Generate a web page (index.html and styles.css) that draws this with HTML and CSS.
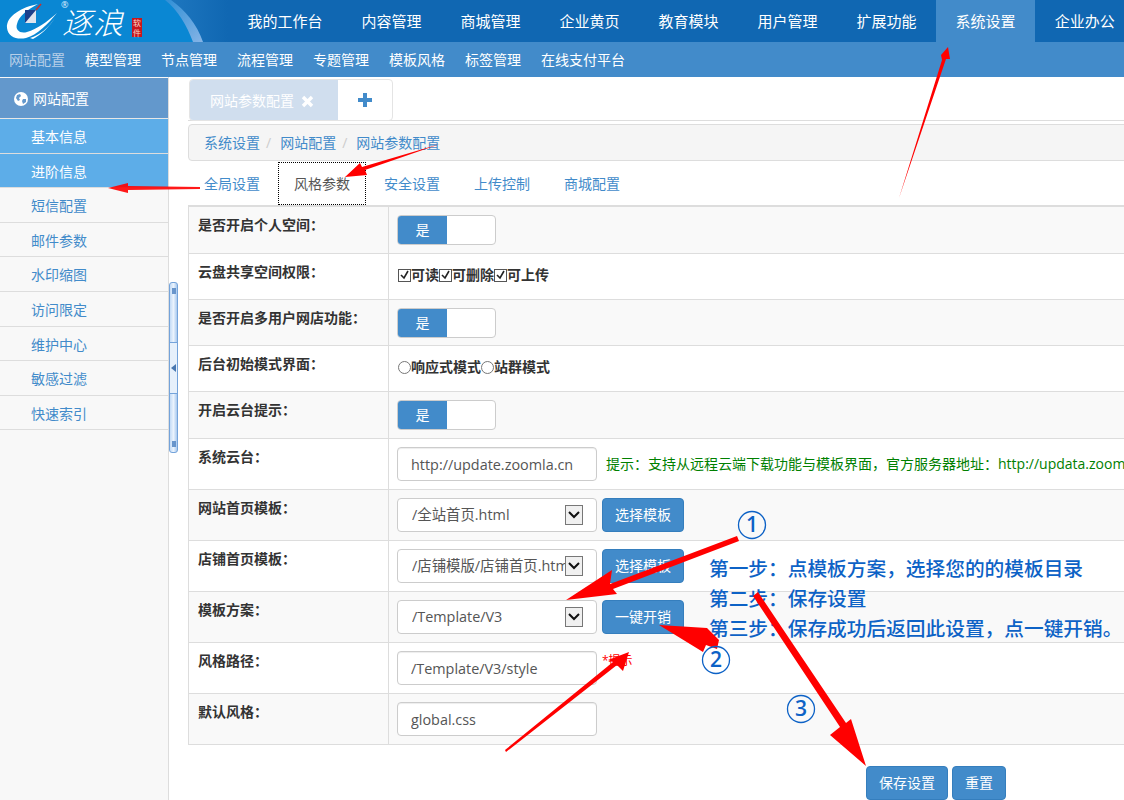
FILE: index.html
```html
<!DOCTYPE html>
<html lang="zh-CN">
<head>
	<meta charset="UTF-8">
	<title>网站参数配置</title>
	<link rel="stylesheet" href="styles.css">
</head>
<body>
	<div class="top">
		<div class="logo">
			<svg class="logo_mark" width="62" height="42" viewBox="0 0 62 42">
				<path d="M38 4C22 7 6 16 7 28c1 9 10 12 19 10 11-3 22-14 31-25-10 9-20 16-30 19-7 2-12-2-10-8 2-8 10-14 21-20z" fill="#fff"/>
				<path d="M30 38c10-3 18-10 25-20-6 9-14 17-22 21z" fill="#fff"/>
				<path d="M25 10h11v13H25z" fill="#dfe5ee"/>
				<path d="M25 23l11-13H25z" fill="#1d3f8a"/>
				<path d="M36 10l5-6" stroke="#c9302c" stroke-width="1.5"/>
			</svg>
			<span class="logo_r">®</span>
			<span class="logo_name">逐浪</span>
			<span class="logo_seal">软件</span>
			<svg class="logo_band" width="63" height="42" viewBox="0 0 63 42">
				<defs>
					<linearGradient id="band" x1="0" y1="0" x2="1" y2="1">
						<stop offset="0" stop-color="#2f8fd6"/>
						<stop offset="1" stop-color="#86b4e6"/>
					</linearGradient>
					<linearGradient id="night" x1="0" y1="0" x2="1" y2="0">
						<stop offset="0" stop-color="#1f78c0"/>
						<stop offset="1" stop-color="#1067b2"/>
					</linearGradient>
				</defs>
				<rect width="63" height="42" fill="url(#night)"/>
				<path d="M0 0h4c14 10 27 24 34 42H0z" fill="#0a87d3"/>
				<path d="M0 0h6c14 10 26 24 32 42h-10C22 26 13 10 0 0z" fill="url(#band)"/>
			</svg>
		</div>
		<a class="top_item" href="#">我的工作台</a>
		<a class="top_item" href="#">内容管理</a>
		<a class="top_item" href="#">商城管理</a>
		<a class="top_item" href="#">企业黄页</a>
		<a class="top_item" href="#">教育模块</a>
		<a class="top_item" href="#">用户管理</a>
		<a class="top_item" href="#">扩展功能</a>
		<a class="top_item top_active" href="#">系统设置</a>
		<a class="top_item" href="#">企业办公</a>
	</div>

	<div class="subnav">
		<a class="sub_item sub_active" href="#">网站配置</a>
		<a class="sub_item" href="#">模型管理</a>
		<a class="sub_item" href="#">节点管理</a>
		<a class="sub_item" href="#">流程管理</a>
		<a class="sub_item" href="#">专题管理</a>
		<a class="sub_item" href="#">模板风格</a>
		<a class="sub_item" href="#">标签管理</a>
		<a class="sub_item" href="#">在线支付平台</a>
	</div>

	<div class="content">
		<div class="side">
			<div class="side_head">
				<svg width="14" height="14" viewBox="0 0 14 14">
					<circle cx="7" cy="7" r="7" fill="#fff"/>
					<path d="M3 3l3-1 1 2-2 2 1 2-2 1-2-3zM9 7l3 0 0 3-3 2-1-3z" fill="#6398cc"/>
				</svg>
				网站配置
			</div>
			<a class="side_item side_on" href="#">基本信息</a>
			<a class="side_item side_on" href="#">进阶信息</a>
			<a class="side_item" href="#">短信配置</a>
			<a class="side_item" href="#">邮件参数</a>
			<a class="side_item" href="#">水印缩图</a>
			<a class="side_item" href="#">访问限定</a>
			<a class="side_item" href="#">维护中心</a>
			<a class="side_item" href="#">敏感过滤</a>
			<a class="side_item" href="#">快速索引</a>
		</div>

		<div class="main">
			<div class="pagebar">
				<div class="pagetabs">
					<div class="pagetab">
						网站参数配置
						<svg width="13" height="13" viewBox="0 0 13 13"><path d="M2 2l9 9M11 2l-9 9" stroke="#fff" stroke-width="3.4"/></svg>
					</div>
					<div class="pageadd">
						<svg width="14" height="14" viewBox="0 0 14 14"><path d="M7 0v14M0 7h14" stroke="#428bca" stroke-width="4"/></svg>
					</div>
				</div>
			</div>

			<div class="crumb">
				<a href="#">系统设置</a><i>/</i><a href="#">网站配置</a><i>/</i><a href="#">网站参数配置</a>
			</div>

			<div class="tabs">
				<a class="tab" href="#">全局设置</a>
				<a class="tab tab_on" href="#">风格参数</a>
				<a class="tab" href="#">安全设置</a>
				<a class="tab" href="#">上传控制</a>
				<a class="tab" href="#">商城配置</a>
			</div>

			<table class="form">
				<tr class="row_m">
					<td class="lbl">是否开启个人空间：</td>
					<td><div class="toggle"><span>是</span></div></td>
				</tr>
				<tr class="row_s">
					<td class="lbl">云盘共享空间权限：</td>
					<td>
						<div class="choices">
							<span class="check"><svg width="11" height="11" viewBox="0 0 11 11"><path d="M2 5l3 3 4-7" fill="none" stroke="#222" stroke-width="1.6"/></svg></span>可读
							<span class="check"><svg width="11" height="11" viewBox="0 0 11 11"><path d="M2 5l3 3 4-7" fill="none" stroke="#222" stroke-width="1.6"/></svg></span>可删除
							<span class="check"><svg width="11" height="11" viewBox="0 0 11 11"><path d="M2 5l3 3 4-7" fill="none" stroke="#222" stroke-width="1.6"/></svg></span>可上传
						</div>
					</td>
				</tr>
				<tr class="row_s">
					<td class="lbl">是否开启多用户网店功能：</td>
					<td><div class="toggle"><span>是</span></div></td>
				</tr>
				<tr class="row_s">
					<td class="lbl">后台初始模式界面：</td>
					<td>
						<div class="choices">
							<span class="radio"></span>响应式模式
							<span class="radio"></span>站群模式
						</div>
					</td>
				</tr>
				<tr class="row_m">
					<td class="lbl">开启云台提示：</td>
					<td><div class="toggle"><span>是</span></div></td>
				</tr>
				<tr class="row_l">
					<td class="lbl">系统云台：</td>
					<td>
						<div class="field">
							<input class="text" type="text" value="http://update.zoomla.cn">
							<span class="hint">提示：支持从远程云端下载功能与模板界面，官方服务器地址：http://updata.zoomla.cn</span>
						</div>
					</td>
				</tr>
				<tr class="row_l">
					<td class="lbl">网站首页模板：</td>
					<td>
						<div class="field">
							<div class="sel"><span>/全站首页.html</span><b class="sel_btn"><svg width="12" height="8" viewBox="0 0 12 8"><path d="M1 1l5 5 5-5" fill="none" stroke="#111" stroke-width="2"/></svg></b></div>
							<a class="btn" href="#">选择模板</a>
						</div>
					</td>
				</tr>
				<tr class="row_l">
					<td class="lbl">店铺首页模板：</td>
					<td>
						<div class="field">
							<div class="sel"><span>/店铺模版/店铺首页.html</span><b class="sel_btn"><svg width="12" height="8" viewBox="0 0 12 8"><path d="M1 1l5 5 5-5" fill="none" stroke="#111" stroke-width="2"/></svg></b></div>
							<a class="btn" href="#">选择模板</a>
						</div>
					</td>
				</tr>
				<tr class="row_l">
					<td class="lbl">模板方案：</td>
					<td>
						<div class="field">
							<div class="sel"><span>/Template/V3</span><b class="sel_btn"><svg width="12" height="8" viewBox="0 0 12 8"><path d="M1 1l5 5 5-5" fill="none" stroke="#111" stroke-width="2"/></svg></b></div>
							<a class="btn" href="#">一键开销</a>
						</div>
					</td>
				</tr>
				<tr class="row_l">
					<td class="lbl">风格路径：</td>
					<td>
						<div class="field">
							<input class="text" type="text" value="/Template/V3/style">
							<span class="warn">*提示</span>
						</div>
					</td>
				</tr>
				<tr class="row_l">
					<td class="lbl">默认风格：</td>
					<td><input class="text" type="text" value="global.css"></td>
				</tr>
			</table>

			<div class="actions">
				<a class="btn" href="#">保存设置</a>
				<a class="btn" href="#">重置</a>
			</div>
		</div>
	</div>

	<div class="handle">
		<div class="handle_notch"><svg width="5" height="8" viewBox="0 0 5 8"><path d="M5 0v8L0 4z" fill="#4a78b0"/></svg></div>
	</div>

	<!-- 截图上的标注 -->
	<div class="steps">
		<p>第一步：点模板方案，选择您的的模板目录</p>
		<p>第二步：保存设置</p>
		<p>第三步：保存成功后返回此设置，点一键开销。</p>
	</div>
	<svg class="marks" width="1124" height="800" viewBox="0 0 1124 800">
		<g fill="#f00">
			<path d="M737 536L610 584 612 570 566 600 617 594 613 589 739 541z"/>
			<path d="M719 640L707 628 659 625 703 652 706 645 717 649z"/>
			<path d="M753 596L840 727 830 735 866 766 851 719 846 723 758 592z"/>
			<path d="M506 752L617 665 623 671 629 652 608 660 613 662 505 750z"/>
			<path d="M899 198L942 60 941 55 948 47 950 59 946 59z"/>
			<path d="M440 144L365 170 367 175 345 177 360 163 362 167z"/>
			<path d="M200 187L128 186 128 183 108 188 128 193 128 190 200 189z" opacity=".9"/>
		</g>
		<g class="num">
			<circle cx="752" cy="525" r="13.5"/>
			<text x="752" y="532">1</text>
			<circle cx="716" cy="660" r="13.5"/>
			<text x="716" y="667">2</text>
			<circle cx="801" cy="709" r="13.5"/>
			<text x="801" y="716">3</text>
		</g>
	</svg>
</body>
</html>
```

FILE: styles.css
```css
* {
	box-sizing: border-box;
}

html,
body {
	height: 800px;
	margin: 0;
	overflow: hidden;
}

body {
	position: relative;
	font-family: "Open Sans", "Noto Sans CJK SC", sans-serif;
	font-size: 14px;
	line-height: 20px;
	color: #555;
	background: #fff;
}

a {
	text-decoration: none;
}

/* top bar */
.top {
	display: flex;
	height: 42px;
	background: #1067b2;
}

.logo {
	position: relative;
	flex: 0 0 228px;
	background: #0a87d3;
}

.logo_mark {
	position: absolute;
	left: 0;
	top: 0;
	z-index: 1;
}

.logo_r {
	position: absolute;
	left: 61px;
	top: 0;
	font-size: 9px;
	line-height: 9px;
	color: #dfeeff;
	z-index: 1;
}

.logo_name {
	position: absolute;
	left: 62px;
	top: 9px;
	font-size: 30px;
	line-height: 28px;
	letter-spacing: 1px;
	color: #fff;
	font-weight: 300;
	font-style: italic;
	z-index: 1;
}

.logo_seal {
	position: absolute;
	left: 132px;
	top: 18px;
	width: 10px;
	height: 19px;
	background: #c8161d;
	color: #f6d7c8;
	font-size: 8px;
	line-height: 9.5px;
	text-align: center;
	z-index: 1;
}

.logo_band {
	position: absolute;
	left: 165px;
	top: 0;
}

.top_item {
	padding: 0 19.5px;
	font-size: 15px;
	line-height: 42px;
	color: #fff;
	white-space: nowrap;
}

.top_active {
	background: #428bca;
}

.subnav {
	display: flex;
	height: 35px;
	background: #428bca;
}

.sub_item {
	padding: 0 10px;
	margin-left: -1px;
	margin-right: 1px;
	line-height: 35px;
	color: #fff;
}

.sub_active {
	color: #b7cfe8;
}

/* sidebar */
.content {
	display: flex;
	height: 723px;
}

.side {
	flex: 0 0 169px;
	padding-top: 1px;
	background: #f8f8f8;
	border-right: 1px solid #ddd;
}

.side_head {
	display: flex;
	align-items: center;
	gap: 5px;
	height: 41px;
	padding: 2px 0 0 14px;
	background: #6398cc;
	border-bottom: 1px solid #e6e6e6;
	color: #fff;
}

.side_item {
	display: block;
	height: 34.6px;
	padding: 1px 0 0 31px;
	line-height: 33px;
	color: #428bca;
	border-bottom: 1px solid #ddd;
}

.side_on {
	background: #5dade8;
	color: #fff;
}

.handle {
	position: absolute;
	left: 169px;
	top: 282px;
	width: 9px;
	height: 171px;
	background: linear-gradient(90deg, #c3dbf6, #eaf3fd 50%, #a9c9ee);
	border: 1px solid #74a3da;
	border-radius: 3px;
}

.handle::before,
.handle::after {
	content: "";
	position: absolute;
	left: 2px;
	width: 4px;
	height: 6px;
	background: radial-gradient(circle, #5f8fc8 0, #5f8fc8 .7px, transparent .8px) 0 0 / 2px 2px;
}

.handle::before {
	top: 5px;
}

.handle::after {
	bottom: 5px;
}

.handle_notch {
	display: flex;
	align-items: center;
	justify-content: center;
	height: 52px;
	margin-top: 59px;
	background: #e6f0fb;
	border-top: 1px solid #74a3da;
	border-bottom: 1px solid #74a3da;
}

/* main */
.main {
	flex: 1;
	min-width: 0;
	padding: 2px 0 0 19px;
	overflow: hidden;
}

.pagebar {
	height: 42px;
	margin-right: -10px;
	border-bottom: 1px solid #ddd;
}

.pagetabs {
	display: flex;
	width: 204px;
	height: 42px;
	margin-left: 1px;
	border: 1px solid #e4e4e4;
	border-radius: 4px;
	overflow: hidden;
}

.pagetab {
	display: flex;
	align-items: center;
	gap: 7px;
	width: 148px;
	padding: 2px 0 0 20px;
	background: #d0deee;
	color: #fff;
}

.pageadd {
	flex: 1;
	display: flex;
	align-items: center;
	justify-content: center;
}

.crumb {
	height: 37px;
	margin: 3px -10px 0 0;
	padding-left: 15px;
	background: #f5f5f5;
	border: 1px solid #ddd;
	border-radius: 4px;
	line-height: 36px;
}

.crumb a {
	color: #428bca;
}

.crumb i {
	padding: 0 9px 0 6px;
	color: #ccc;
	font-style: normal;
}

.tabs {
	display: flex;
	height: 44px;
	margin-top: 1px;
	margin-right: -10px;
	border-bottom: 1px solid #ddd;
}

.tab {
	width: 88px;
	height: 43px;
	margin-right: 2px;
	padding-left: 16px;
	line-height: 44px;
	color: #428bca;
}

.tab_on {
	margin-top: 0;
	color: #555;
	border: 1px dotted #000;
	padding-left: 15px;
	line-height: 42px;
}

/* form table */
.form {
	width: 960px;
	table-layout: fixed;
	border-collapse: collapse;
	border: 1px solid #ddd;
}

.form td {
	padding: 8px;
	vertical-align: top;
	border: 1px solid #ddd;
}

.form tr:nth-child(odd) {
	background: #f9f9f9;
}

.row_s {
	height: 46px;
}

.row_m {
	height: 47px;
}

.row_l {
	height: 51px;
}

.form .lbl {
	width: 200px;
	padding-left: 9px;
	font-weight: bold;
	color: #333;
}

.toggle {
	width: 99px;
	height: 30px;
	margin: 0 0 -1px 0;
	background: #fff;
	border: 1px solid #ccc;
	border-radius: 4px;
	overflow: hidden;
}

.toggle span {
	display: block;
	width: 49px;
	height: 100%;
	background: #428bca;
	color: #fff;
	line-height: 28px;
	text-align: center;
}

.choices {
	display: flex;
	align-items: center;
	height: 20px;
	margin: 3px 0 0 1px;
	font-weight: bold;
	color: #333;
}

.check {
	display: flex;
	align-items: center;
	justify-content: center;
	width: 13px;
	height: 13px;
	background: #fff;
	border: 1px solid #555;
}

.radio {
	width: 13px;
	height: 13px;
	background: #fff;
	border: 1px solid #777;
	border-radius: 50%;
}

.field {
	display: flex;
	align-items: center;
	gap: 5px;
}

.text {
	width: 200px;
	height: 34px;
	padding: 0 13px;
	background: #fff;
	border: 1px solid #ccc;
	border-radius: 4px;
	box-shadow: inset 0 1px 1px rgba(0, 0, 0, .075);
	font: inherit;
	font-size: 14.4px;
	color: #555;
	flex: none;
}

.sel {
	display: flex;
	align-items: center;
	flex: none;
	width: 200px;
	height: 34px;
	padding: 0 13px 0 14px;
	background: #fff;
	border: 1px solid #ccc;
	border-radius: 4px;
	font-size: 14.4px;
	overflow: hidden;
}

.sel span {
	flex: none;
	width: 153px;
	overflow: hidden;
	white-space: nowrap;
}

.sel_btn {
	display: flex;
	align-items: center;
	justify-content: center;
	flex: none;
	width: 18px;
	height: 20px;
	background: #f0f0f0;
	border: 1px solid #777;
}

.btn {
	flex: none;
	display: inline-block;
	height: 34px;
	padding: 0 12px;
	background: #428bca;
	border: 1px solid #357ebd;
	border-radius: 4px;
	color: #fff;
	line-height: 32px;
}

.hint {
	margin-left: 4px;
	color: #008000;
	white-space: nowrap;
}

.warn {
	align-self: flex-start;
	font-size: 12px;
	color: #f00;
}

.actions {
	display: flex;
	gap: 4px;
	margin-top: 21px;
	padding-left: 678px;
}

/* annotations */
.steps {
	position: absolute;
	left: 709px;
	top: 554px;
	white-space: nowrap;
	font-size: 19.7px;
	font-weight: 500;
	line-height: 30px;
	color: #0d62c6;
}

.steps p {
	margin: 0;
}

.marks {
	position: absolute;
	left: 0;
	top: 0;
}

.num circle {
	fill: none;
	stroke: #0d62c6;
	stroke-width: 1.3;
}

.num text {
	fill: #0d62c6;
	font-family: "Open Sans", sans-serif;
	font-size: 21px;
	font-weight: 600;
	text-anchor: middle;
}
```
